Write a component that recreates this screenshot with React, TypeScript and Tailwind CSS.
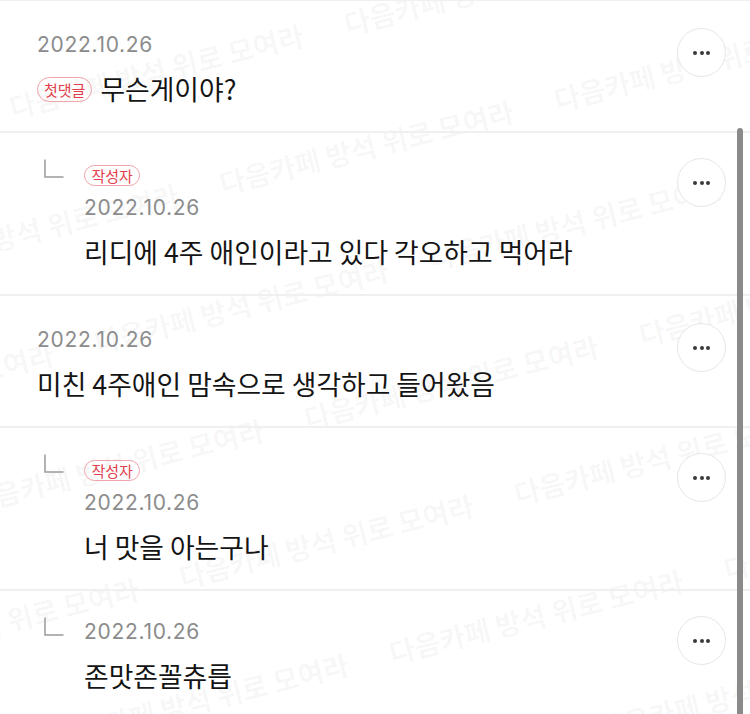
import clsx from "clsx";

// ─── Data ─────────────────────────────────────────────────────────────────────

const WATERMARK = "다음카페 방석 위로 모여라";

type Comment = {
  id: number;
  date: string;
  body: string;
  badge?: "첫댓글" | "작성자";
  reply: boolean;
};

const COMMENTS: Comment[] = [
  { id: 1, date: "2022.10.26", body: "무슨게이야?", badge: "첫댓글", reply: false },
  { id: 2, date: "2022.10.26", body: "리디에 4주 애인이라고 있다 각오하고 먹어라", badge: "작성자", reply: true },
  { id: 3, date: "2022.10.26", body: "미친 4주애인 맘속으로 생각하고 들어왔음", reply: false },
  { id: 4, date: "2022.10.26", body: "너 맛을 아는구나", badge: "작성자", reply: true },
  { id: 5, date: "2022.10.26", body: "존맛존꼴츄릅", reply: true },
];

// watermark rows: text run start (page x) and where the row crosses x=0
const WM_PERIOD = 335;
const WM_ROWS = [0, 1, 2, 3, 4, 5, 6].map((k) => {
  const start = (10 + 210 * k) % WM_PERIOD;
  const x0 = start - 2 * WM_PERIOD;
  const cross = 110 + 128 * k;
  return { k, left: x0, top: cross - 0.249 * x0 - 17 };
});

// ─── Pieces ───────────────────────────────────────────────────────────────────

function Watermark() {
  return (
    <div className="pointer-events-none absolute inset-0 overflow-hidden">
      {WM_ROWS.map((row) => (
        <div
          key={row.k}
          className="absolute flex h-[34px] origin-left -rotate-[14deg] whitespace-nowrap text-[28px] font-bold leading-[34px] text-black/[0.04]"
          style={{ left: row.left, top: row.top }}
        >
          {Array.from({ length: 6 }).map((_, i) => (
            <span key={i} className="w-[345px] shrink-0">
              {WATERMARK}
            </span>
          ))}
        </div>
      ))}
    </div>
  );
}

function Badge({ label, inline }: { label: string; inline: boolean }) {
  return (
    <span
      className={clsx(
        "inline-flex shrink-0 items-center rounded-full border border-[#f0a3aa] text-[15px] leading-none text-[#e23e4b]",
        inline ? "h-[25px] px-[6px]" : "h-[21px] px-[6.5px]"
      )}
    >
      {label}
    </span>
  );
}

function ReplyMark() {
  return (
    <svg className="mt-[26px] shrink-0" width="20" height="19" viewBox="0 0 20 19" fill="none">
      <path d="M1 0.5V18H19.5" stroke="#9b9b9b" strokeWidth="1.5" />
    </svg>
  );
}

function MoreButton({ reply }: { reply: boolean }) {
  return (
    <div
      className={clsx(
        "mr-[24px] flex h-[49px] w-[49px] shrink-0 items-center justify-center gap-[2.5px] rounded-full border border-[#e6e6e6] bg-white",
        reply ? "mt-[25px]" : "mt-[27px]"
      )}
    >
      <span className="h-[4px] w-[4px] rounded-full bg-[#3a3a3a]" />
      <span className="h-[4px] w-[4px] rounded-full bg-[#3a3a3a]" />
      <span className="h-[4px] w-[4px] rounded-full bg-[#3a3a3a]" />
    </div>
  );
}

function Body({ c }: { c: Comment }) {
  const topBadge = c.reply && c.badge;
  return (
    <div
      className={clsx(
        "flex min-w-0 flex-1 flex-col",
        topBadge ? "pt-[32px]" : c.reply ? "pt-[28px]" : "pt-[31px]"
      )}
    >
      {topBadge && (
        <div className="mb-[9px] flex">
          <Badge label={c.badge!} inline={false} />
        </div>
      )}
      <p className="h-[26px] text-[21px] leading-[26px] tracking-[0.7px] text-[#8c8c8c] [font-family:Inter,'Noto_Sans_CJK_KR',sans-serif]">
        {c.date}
      </p>
      <div className="mt-[14px] flex h-[34px] items-center gap-[8px]">
        {!c.reply && c.badge && <Badge label={c.badge} inline />}
        <p className="whitespace-nowrap text-[26.8px] leading-[34px] text-[#141414]">{c.body}</p>
      </div>
    </div>
  );
}

function CommentRow({ c }: { c: Comment }) {
  return (
    <div className="flex items-start border-b-2 border-[#f0f0f0] pb-[25px]">
      {c.reply ? (
        <div className="flex min-w-0 flex-1 pl-[44px]">
          <ReplyMark />
          <div className="ml-[20px] flex min-w-0 flex-1">
            <Body c={c} />
          </div>
        </div>
      ) : (
        <div className="flex min-w-0 flex-1 pl-[37px]">
          <Body c={c} />
        </div>
      )}
      <MoreButton reply={c.reply} />
    </div>
  );
}

// ─── Export ───────────────────────────────────────────────────────────────────

export default function App() {
  return (
    <div className="relative h-[714px] w-full overflow-hidden bg-white [font-family:'Noto_Sans_CJK_KR','Noto_Sans',sans-serif]">
      <Watermark />
      <div className="relative border-t border-[#f0f0f0]">
        {COMMENTS.map((c) => (
          <CommentRow key={c.id} c={c} />
        ))}
      </div>
      {/* scrollbar */}
      <div className="absolute bottom-0 right-[7px] top-[128px] w-[6px] rounded-t-full bg-[#8a8a8a]" />
    </div>
  );
}
